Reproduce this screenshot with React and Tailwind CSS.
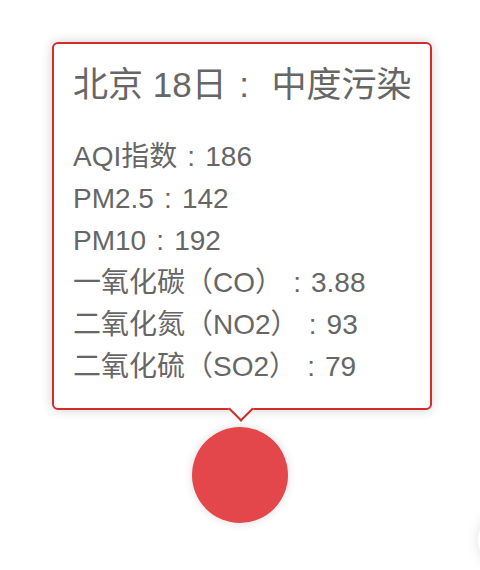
const rows = [
    ['AQI指数', '186'],
    ['PM2.5', '142'],
    ['PM10', '192'],
    ['一氧化碳（CO）', '3.88'],
    ['二氧化氮（NO2）', '93'],
    ['二氧化硫（SO2）', '79'],
]

// 全角冒号，居中放在一个字宽的格子里
function Colon() {
    return <span className="inline-block w-[1em] text-center">:</span>
}

export default function App() {
    return (
        <div className="w-[480px] h-[570px] bg-white overflow-hidden flex flex-col relative"
            style={{ fontFamily: "'Liberation Sans', 'Noto Sans CJK SC', sans-serif" }}>

            {/* Tooltip */}
            <div className="relative mt-[42px] ml-[52px] w-[380px] bg-white border-2 border-[#d42b2b] rounded-[6px]
                px-[19px] py-[20px] text-[#666666] shadow-[0_0_12px_rgba(0,0,0,0.18)]">
                <div className="text-[35px] leading-[42px] whitespace-nowrap">
                    北京 18日<Colon /> 中度污染
                </div>
                <div className="mt-[30px] text-[28px] leading-[42px] whitespace-nowrap">
                    {rows.map(([k, v]) => (
                        <div key={k}>{k}<Colon />{v}</div>
                    ))}
                </div>
                <div className="absolute left-[178px] bottom-[-10px] w-[18px] h-[18px] bg-white rotate-45
                    border-r-2 border-b-2 border-[#d42b2b]" />
            </div>

            {/* Point */}
            <div className="mt-[17px] ml-[192px] w-[96px] h-[96px] rounded-full bg-[#e3474b]
                shadow-[0_0_10px_rgba(0,0,0,0.15)]" />

            {/* 右下角露出的另一个点的阴影 */}
            <div className="absolute left-[478px] top-[510px] w-[60px] h-[60px] rounded-full bg-white
                shadow-[0_0_14px_rgba(0,0,0,0.12)]" />
        </div>
    )
}
